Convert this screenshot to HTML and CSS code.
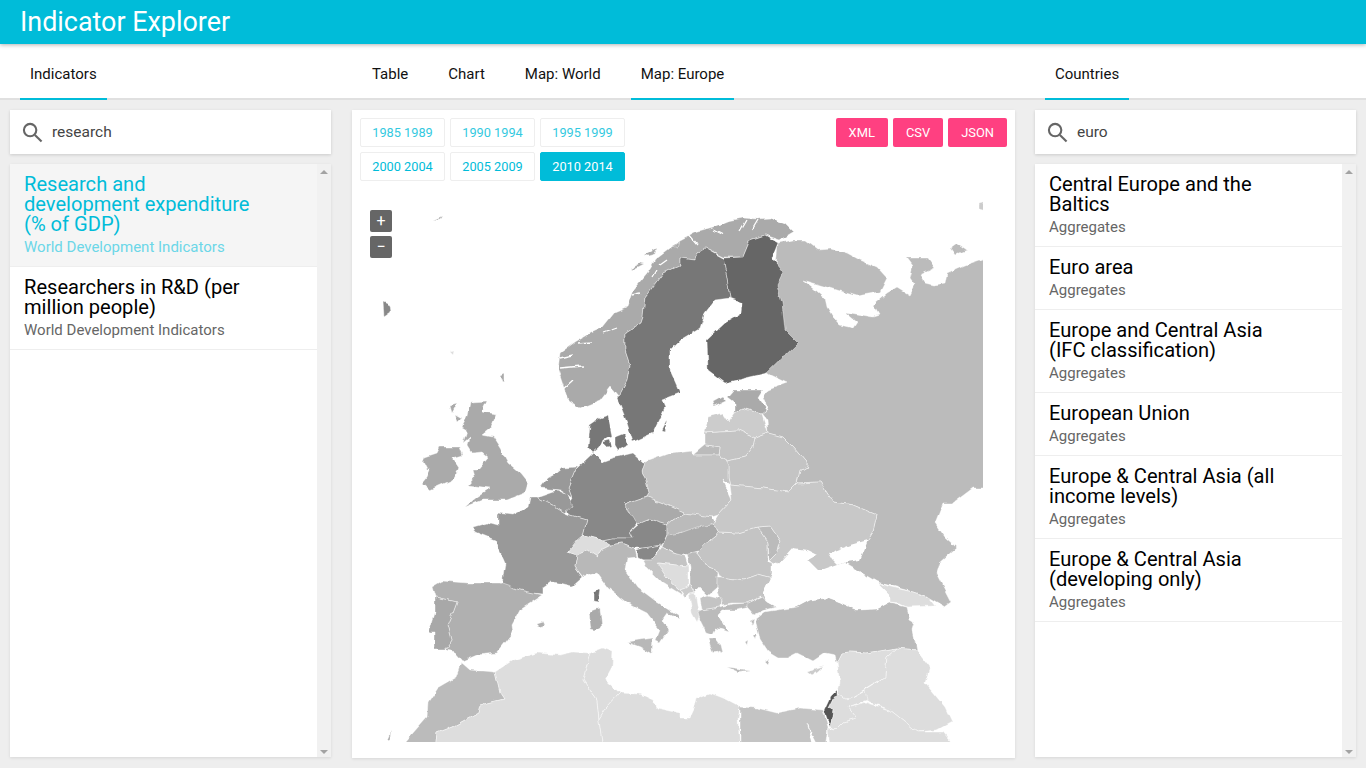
FILE: index.html
```html
<!DOCTYPE html>
<html lang="en">
<head>
<meta charset="utf-8">
<title>Indicator Explorer</title>
<link rel="stylesheet" href="styles.css">
</head>
<body>
<header class="appbar"><h1 class="appbar-title">Indicator Explorer</h1></header>
<main class="layout">
  <section class="col">
    <nav class="tabs"><a class="tab active">Indicators</a></nav>
    <div class="col-body">
      <div class="search">
        <svg class="search-icon" viewBox="0 0 22 22"><circle cx="8.5" cy="8.5" r="6.5"/><path d="M13.5 13.5 20.5 20.5"/></svg>
        <span class="search-text">research</span>
      </div>
      <div class="list-wrap">
        <ul class="list">
          <li class="item selected"><div class="item-title">Research and development expenditure (% of GDP)</div><div class="item-sub">World Development Indicators</div></li>
          <li class="item"><div class="item-title">Researchers in R&amp;D (per million people)</div><div class="item-sub">World Development Indicators</div></li>
        </ul>
        <div class="scrollbar"><i class="arrow-up"></i><i class="arrow-down"></i></div>
      </div>
    </div>
  </section>
  <section class="col col-main">
    <nav class="tabs"><a class="tab">Table</a><a class="tab">Chart</a><a class="tab">Map: World</a><a class="tab active">Map: Europe</a></nav>
    <div class="col-body">
      <div class="panel">
        <div class="toolbar">
          <div class="years">
            <button class="year faded">1985 1989</button><button class="year faded">1990 1994</button><button class="year faded">1995 1999</button>
            <button class="year">2000 2004</button><button class="year">2005 2009</button><button class="year on">2010 2014</button>
          </div>
          <div class="exports"><button class="export">XML</button><button class="export">CSV</button><button class="export">JSON</button></div>
        </div>
        <div class="map">
          <div class="zoom"><button class="zoom-btn">+</button><button class="zoom-btn">−</button></div>
          <svg class="map-svg" viewBox="352 190 663 552" preserveAspectRatio="none">
            <defs>
              <clipPath id="mapclip"><rect x="352" y="190" width="631" height="552"/></clipPath>
              <filter id="rough" x="352" y="190" width="663" height="570" filterUnits="userSpaceOnUse" color-interpolation-filters="sRGB">
                <feTurbulence type="fractalNoise" baseFrequency=".11" numOctaves="2" seed="4" result="n"/>
                <feDisplacementMap in="SourceGraphic" in2="n" scale="5" xChannelSelector="R" yChannelSelector="G"/>
              </filter>
            </defs>
            <g clip-path="url(#mapclip)">
            <g filter="url(#rough)">
            <g class="land">
              <polygon class="s-bb" points="767,373 778,243 793,240 805,240 817,249 830,248 847,253 860,260 877,267 887,278 880,292 857,296 827,287 803,280 812,287 825,298 827,307 833,317 840,325 853,328 857,322 845,312 873,317 879,315 873,305 887,293 897,287 910,295 915,285 910,278 913,266 907,258 928,258 935,268 920,275 925,283 933,285 945,283 947,273 965,265 983,259 990,257 990,488 973,488 953,503 943,503 935,523 945,537 957,548 940,563 937,573 952,602 945,607 928,597 913,592 877,582 845,563 868,540 873,532 877,515 853,505 833,502 820,482 797,483 800,470 810,467 793,447 783,437 768,433 767,420 762,413 768,410 763,398 768,390 787,383 770,375"/>
              <polygon class="s-bb" points="950,248 957,243 967,250 955,255"/>
              <polygon class="s-cc" points="990,200 979,203 979,209 990,212"/>
              <polygon class="s-aa" points="580,408 568,400 563,385 558,370 560,353 575,342 590,333 603,327 615,312 627,307 633,290 647,273 655,260 668,250 680,240 695,232 713,227 728,221 743,218 757,219 770,218 785,224 793,232 780,240 765,235 750,240 743,257 723,257 705,248 697,253 695,260 680,258 680,265 663,273 645,297 643,317 641,323 625,333 625,350 630,365 627,380 618,397 610,387 600,400"/>
              <polygon class="s-aa" points="644,255 652,250 657,247 655,254 648,256"/>
              <polygon class="s-aa" points="631,268 640,263 644,264 634,269"/>
              <polygon class="s-aa" points="672,246 680,242 678,248"/>
              <polygon class="s-77" points="697,253 695,260 680,258 680,265 663,273 645,297 643,317 641,323 625,333 625,350 630,365 627,380 618,397 617,398 627,423 633,442 653,433 665,407 662,400 680,393 670,370 670,350 680,340 700,328 705,313 715,300 730,298 727,277 723,258 705,248"/>
              <polygon class="s-77" points="662,430 667,420 665,431"/>
              <polygon class="s-66" points="723,258 727,277 730,298 743,303 742,313 725,323 707,340 708,370 725,383 750,377 767,373 798,343 785,330 782,303 777,285 783,272 772,258 778,243 765,235 750,240 743,257"/>
              <polygon class="s-aa" points="727,397 733,390 763,390 758,398 767,410 762,414 742,408 735,412 735,403"/>
              <polygon class="s-aa" points="713,401 722,396 726,401 715,406"/>
              <polygon class="s-cc" points="708,417 722,413 728,422 735,412 742,408 762,414 768,433 755,438 738,430 720,431 705,432"/>
              <polygon class="s-c4" points="705,432 720,431 738,430 755,438 753,447 745,457 728,461 719,455 720,447 705,445"/>
              <polygon class="s-bb" points="705,445 720,447 719,455 693,455"/>
              <polygon class="s-c4" points="755,438 768,433 783,437 793,447 810,467 800,470 797,483 788,492 763,488 730,485 728,477 728,461 745,457 753,447"/>
              <polygon class="s-c4" points="645,462 670,453 693,450 693,455 719,455 728,461 728,477 730,485 723,480 732,500 718,515 712,517 685,513 663,503 647,497 649,493 645,477 642,472"/>
              <polygon class="s-88" points="575,470 593,453 602,462 613,458 633,453 643,462 645,462 642,472 645,477 649,493 647,497 624,505 638,523 630,532 633,538 613,538 602,540 583,535 587,520 570,515 567,507 572,498 568,487"/>
              <polygon class="s-77" points="590,425 600,418 608,415 610,425 612,437 603,440 600,447 593,453 588,447"/>
              <polygon class="s-77" points="603,442 610,440 612,446 606,447"/>
              <polygon class="s-77" points="615,437 625,433 628,445 618,450 615,445"/>
              <polygon class="s-99" points="557,473 563,468 577,467 575,470 568,487 572,498 560,490 540,488 548,478"/>
              <polygon class="s-99" points="537,497 557,490 568,495 572,507 565,513 557,508"/>
              <polygon class="s-99" points="473,527 487,523 498,526 498,513 513,515 528,507 530,497 537,497 557,508 565,513 570,515 587,520 583,535 568,552 577,555 575,567 582,577 572,586 560,583 550,582 543,587 543,594 533,593 520,590 502,585 505,563 495,540 475,532"/>
              <polygon class="s-77" points="593,593 600,588 598,603 593,602"/>
              <polygon class="s-dd" points="568,552 577,540 583,535 602,540 610,545 600,550 597,556 588,550 577,555"/>
              <polygon class="s-88" points="602,540 613,538 633,538 630,532 638,525 650,520 667,525 667,535 662,545 643,548 635,548 622,543 610,545"/>
              <polygon class="s-aa" points="624,505 647,497 663,503 685,513 673,520 667,525 650,520 638,525"/>
              <polygon class="s-bb" points="685,513 712,517 716,523 700,530 680,533 667,537 667,525 673,520"/>
              <polygon class="s-aa" points="680,533 697,527 712,525 720,532 710,540 703,550 690,553 680,556 662,547 667,535"/>
              <polygon class="s-88" points="637,550 643,548 662,545 652,560 643,560 638,558"/>
              <polygon class="s-c4" points="652,560 662,547 673,553 685,556 688,566 677,565 658,563 667,578 680,590 682,595 663,583 647,567 643,560"/>
              <polygon class="s-dd" points="657,563 688,566 688,587 680,590 667,578"/>
              <polygon class="s-bb" points="687,553 697,553 708,568 718,572 717,587 708,595 700,587 695,592 690,583 690,567"/>
              <polygon class="s-c4" points="697,553 710,540 720,532 738,533 757,527 768,542 768,562 772,563 772,579 757,575 743,580 720,577 718,572 708,568"/>
              <polygon class="s-bb" points="757,527 770,526 780,540 777,552 769,560 768,542"/>
              <polygon class="s-c8" points="718,515 732,500 730,485 763,488 788,492 797,483 820,482 833,502 853,505 877,515 873,532 868,540 845,563 818,575 772,563 769,560 777,552 780,540 770,526 757,527 738,533 720,532 712,525 715,520"/>
              <polygon class="s-c4" points="717,577 720,577 743,580 757,575 772,579 767,585 763,593 768,602 760,597 748,603 733,603 722,605 717,587"/>
              <polygon class="s-c4" points="700,598 708,595 721,598 720,607 702,610"/>
              <polygon class="s-dd" points="689,593 695,592 698,610 702,610 697,622 692,613"/>
              <polygon class="s-cc" points="680,590 688,587 690,583 695,592 689,593 685,597"/>
              <polygon class="s-bb" points="698,613 702,610 720,607 733,604 748,603 750,607 737,610 723,610 718,615 722,622 728,632 722,630 715,628 712,634 706,632 700,620"/>
              <polygon class="s-bb" points="708,638 715,638 720,645 722,653 716,650 713,653 710,646"/>
              <polygon class="s-bb" points="727,667 750,670 738,672"/>
              <polygon class="s-bb" points="750,622 754,620 752,626"/>
              <polygon class="s-bb" points="753,635 757,633 755,640"/>
              <polygon class="s-bb" points="745,642 748,640 747,645"/>
              <polygon class="s-bb" points="765,662 770,659 768,665"/>
              <polygon class="s-bb" points="755,620 765,612 777,610 797,607 810,600 827,598 840,603 857,610 877,609 888,603 907,607 910,620 915,623 913,630 917,650 897,648 867,653 850,652 842,653 837,663 835,655 825,653 813,661 797,653 787,658 778,658 768,652 760,640 758,630"/>
              <polygon class="s-bb" points="762,597 768,602 777,607 765,610 755,615 748,607 748,603"/>
              <polygon class="s-cc" points="807,672 823,667 818,672 812,676"/>
              <polygon class="s-b0" points="432,587 442,581 467,583 500,583 520,590 543,595 520,610 512,625 513,633 497,653 477,655 463,661 455,652 445,650 452,640 448,625 453,613 457,602 435,597"/>
              <polygon class="s-a8" points="435,597 457,602 453,613 448,625 452,640 445,650 434,650 434,633 429,633 435,613"/>
              <polygon class="s-b0" points="537,623 543,621 545,625 539,627"/>
              <polygon class="s-aa" points="589,612 600,608 602,627 595,631 591,630"/>
              <polygon class="s-b8" points="577,555 588,550 597,556 600,550 610,545 622,543 635,548 637,557 627,558 625,570 637,587 657,602 678,615 680,620 667,613 662,620 668,630 660,642 656,640 660,630 647,613 627,603 608,588 597,573 583,577 575,567"/>
              <polygon class="s-b8" points="627,642 653,638 652,654 640,647"/>
              <polygon class="s-bb" points="462,663 470,670 495,672 500,693 504,699 480,705 478,713 452,727 437,733 435,750 398,750 427,717 428,703 438,688 457,677"/>
              <polygon class="s-dd" points="495,672 513,660 537,653 560,655 573,652 590,653 583,680 597,700 599,720 603,750 435,750 437,733 452,727 478,713 480,705 504,699 500,693"/>
              <polygon class="s-dd" points="590,653 603,648 613,652 612,667 605,680 620,693 607,707 599,720 597,700 583,680"/>
              <polygon class="s-dd" points="620,693 640,694 653,700 657,708 680,713 680,718 690,718 695,707 697,698 710,693 723,698 740,707 738,718 740,750 603,750 599,720 607,707"/>
              <polygon class="s-c4" points="740,707 757,708 777,713 800,708 823,710 828,727 825,750 821,750 807,723 815,750 740,750"/>
              <polygon class="s-dd" points="838,670 837,663 842,653 850,652 867,653 897,648 887,657 885,677 847,700 837,693 840,683"/>
              <polygon class="s-dd" points="897,648 917,650 930,667 925,683 945,707 952,722 937,730 918,732 890,710 865,700 865,690 885,677 887,657"/>
              <polygon class="s-dd" points="837,693 847,700 865,690 867,700 848,707 857,718 843,722 835,730 830,727 833,710 828,708 832,700"/>
              <polygon class="s-dd" points="828,728 835,730 843,722 857,718 848,707 865,702 890,710 918,732 943,732 958,750 830,750"/>
              <polygon class="s-55" points="824,710 830,697 837,690 837,697 832,700 828,708 833,710 830,727"/>
              <polygon class="s-dd" points="877,582 890,587 913,592 928,597 935,606 907,607 900,604 890,603 890,595"/>
              <polygon class="s-aa" points="470,402 487,401 482,412 497,414 492,427 482,435 493,437 500,448 508,463 520,473 528,483 525,493 507,500 483,500 465,507 477,497 490,488 468,485 475,477 473,470 477,470 488,457 482,452 473,453 468,445 470,437 463,443 467,430 462,427 467,417"/>
              <polygon class="s-aa" points="425,457 437,453 440,447 460,447 463,455 453,458 459,467 458,470 452,480 430,490 422,483 427,477 430,470 427,470 423,462"/>
              <polygon class="s-aa" points="450,405 457,403 452,412"/>
              <polygon class="s-aa" points="455,414 462,418 458,422"/>
              <polygon class="s-aa" points="500,376 504,374 504,381 502,382"/>
              <polygon class="s-dd" points="450,352 454,351 453,355"/>
              <polygon class="s-88" points="383,302 390,305 391,312 384,317"/>
              <polygon class="s-aa" points="433,221 442,217 440,220"/>
              <polygon class="s-aa" points="387,740 391,731 390,739"/>
            </g>
            <polygon class="sea" points="763,593 775,568 793,548 807,550 817,555 808,560 818,570 823,570 837,565 845,563 853,570 877,582 890,595 888,603 877,609 857,610 840,603 827,598 810,600 797,607 777,607 768,602"/>
            <polygon class="sea" points="828,553 850,545 868,540 865,548 860,560 847,562 837,565 832,560"/>
            <g class="fjords">
              <polyline points="560,358 573,355"/>
              <polyline points="560,368 582,366"/>
              <polyline points="562,390 573,380"/>
              <polyline points="578,343 592,342"/>
              <polyline points="603,333 617,328"/>
              <polyline points="632,295 640,293"/>
              <polyline points="653,277 657,270"/>
              <polyline points="660,265 667,260"/>
              <polyline points="687,233 697,245"/>
              <polyline points="713,230 723,235"/>
              <polyline points="740,232 747,220"/>
              <polyline points="752,230 758,220"/>
            </g>
            </g>
            </g>
          </svg>
        </div>
      </div>
    </div>
  </section>
  <section class="col">
    <nav class="tabs"><a class="tab active">Countries</a></nav>
    <div class="col-body">
      <div class="search">
        <svg class="search-icon" viewBox="0 0 22 22"><circle cx="8.5" cy="8.5" r="6.5"/><path d="M13.5 13.5 20.5 20.5"/></svg>
        <span class="search-text">euro</span>
      </div>
      <div class="list-wrap">
        <ul class="list">
          <li class="item"><div class="item-title">Central Europe and the Baltics</div><div class="item-sub">Aggregates</div></li>
          <li class="item"><div class="item-title">Euro area</div><div class="item-sub">Aggregates</div></li>
          <li class="item"><div class="item-title">Europe and Central Asia (IFC classification)</div><div class="item-sub">Aggregates</div></li>
          <li class="item"><div class="item-title">European Union</div><div class="item-sub">Aggregates</div></li>
          <li class="item"><div class="item-title">Europe &amp; Central Asia (all income levels)</div><div class="item-sub">Aggregates</div></li>
          <li class="item"><div class="item-title">Europe &amp; Central Asia (developing only)</div><div class="item-sub">Aggregates</div></li>
        </ul>
        <div class="scrollbar"><i class="arrow-up"></i><i class="arrow-down"></i></div>
      </div>
    </div>
  </section>
</main>
</body>
</html>
```
FILE: styles.css
```css
* { box-sizing: border-box; }
html, body { margin: 0; height: 100%; }
body {
  display: flex;
  flex-direction: column;
  height: 768px;
  overflow: hidden;
  background: #eeeeee;
  font-family: Roboto, sans-serif;
  color: #000;
}
.appbar {
  position: relative;
  z-index: 2;
  flex: 0 0 44px;
  display: flex;
  align-items: center;
  padding: 0 20px;
  background: #00bcd9;
  box-shadow: 0 1px 4px rgba(0, 0, 0, .3);
}
.appbar-title { margin: 0; font-size: 26.9px; font-weight: 400; line-height: 44px; color: #fff; }
.layout { flex: 1; display: grid; grid-template-columns: 341px 1fr 341px; min-height: 0; }
.col { display: flex; flex-direction: column; min-width: 0; }
.tabs {
  flex: 0 0 56px;
  display: flex;
  padding: 0 10px;
  background: #fff;
  box-shadow: inset 0 -2px 0 #e0e0e0;
}
.col-main .tabs { padding-left: 11px; }
.col-main .col-body { padding-left: 11px; }
.tab {
  margin: 0 10px;
  padding: 0 10px;
  font-size: 15px;
  line-height: 60px;
  height: 56px;
  color: #111;
}
.tab.active { box-shadow: inset 0 -2px 0 #00bcd9; }
.col-body { flex: 1; display: flex; flex-direction: column; gap: 10px; padding: 10px; min-height: 0; }
.search {
  flex: 0 0 44px;
  display: flex;
  align-items: center;
  padding-left: 12px;
  background: #fff;
  box-shadow: 0 1px 3px rgba(0, 0, 0, .15);
}
.search-icon { width: 21px; height: 21px; fill: none; stroke: #666; stroke-width: 2.2; margin-right: 9px; }
.search-text { font-size: 15.5px; color: #444; }
.list-wrap { flex: 1; display: flex; min-height: 0; margin-bottom: 1px; box-shadow: 0 1px 3px rgba(0, 0, 0, .1); }
.list { flex: 1; margin: 0; padding: 0; list-style: none; background: #fff; min-width: 0; }
.item { padding: 10px 60px 10px 14px; border-bottom: 1px solid #eee; }
.item.selected { background: #f5f5f5; }
.item-title { font-size: 20.1px; line-height: 20px; color: #000; }
.item-sub { margin-top: 4px; font-size: 15px; line-height: 18px; color: #666; }
.selected .item-title { color: #00bcd9; }
.selected .item-sub { color: #6cd7e8; }
.scrollbar {
  flex: 0 0 14px;
  display: flex;
  flex-direction: column;
  justify-content: space-between;
  align-items: center;
  padding: 6px 0 3px;
  background: #f1f1f1;
}
.arrow-up { border: 4px solid transparent; border-top: 0; border-bottom: 4px solid #a3a3a3; }
.arrow-down { border: 4px solid transparent; border-bottom: 0; border-top: 4px solid #a3a3a3; }
.panel {
  flex: 1;
  display: flex;
  flex-direction: column;
  background: #fff;
  box-shadow: 0 1px 3px rgba(0, 0, 0, .1);
}
.toolbar { display: flex; justify-content: space-between; padding: 8px 8px 0; }
.years { display: grid; grid-template-columns: repeat(3, 85px); gap: 5px; }
.exports { display: flex; gap: 5px; align-items: flex-start; }
button { font-family: inherit; cursor: pointer; }
.year {
  height: 29px;
  padding: 0;
  font-size: 12.75px;
  background: #fff;
  color: #00bcd9;
  border: 1px solid #eee;
  border-radius: 2px;
}
.year.faded { color: #33c9e0; }
.year.on { background: #00bcd9; border-color: #00bcd9; color: #fff; }
.export {
  height: 29px;
  padding: 0 13px;
  font-size: 12.9px;
  background: #ff4081;
  color: #fff;
  border: 0;
  border-radius: 2px;
}
.map { position: relative; height: 552px; margin-top: 9px; }
.map-svg { display: block; width: 663px; height: 552px; }
.zoom { position: absolute; left: 18px; top: 20px; display: flex; flex-direction: column; gap: 4px; }
.zoom-btn {
  width: 22px;
  height: 22px;
  padding: 0;
  border: 0;
  border-radius: 2px;
  background: #666;
  color: #fff;
  font-size: 16px;
  line-height: 22px;
}
.land polygon { stroke: #fff; stroke-width: .6; stroke-linejoin: round; stroke-opacity: .7; }
.fjords polyline { fill: none; stroke: #fff; stroke-width: 1.3; }
.sea { fill: #fff; }
.s-55 { fill: #555; }
.s-66 { fill: #666; }
.s-77 { fill: #777; }
.s-88 { fill: #888; }
.s-99 { fill: #999; }
.s-a8 { fill: #a8a8a8; }
.s-aa { fill: #aaa; }
.s-b0 { fill: #b0b0b0; }
.s-b8 { fill: #b8b8b8; }
.s-bb { fill: #bbb; }
.s-c4 { fill: #c4c4c4; }
.s-c8 { fill: #c8c8c8; }
.s-cc { fill: #ccc; }
.s-dd { fill: #ddd; }
```
